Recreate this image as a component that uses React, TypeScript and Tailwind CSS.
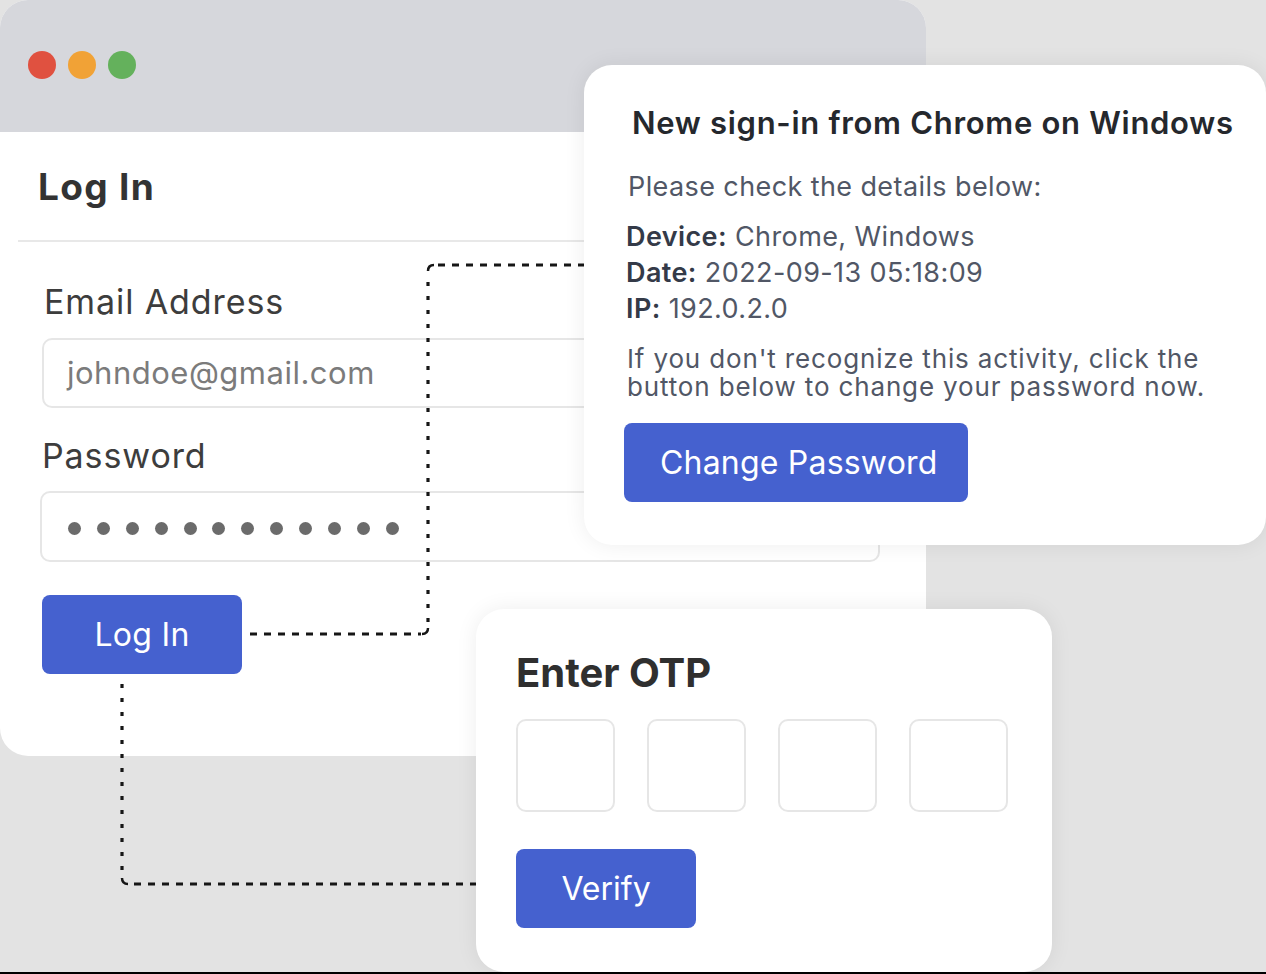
function Connectors() {
  // dotted links from the Log In button to the two follow-up cards
  return (
    <svg
      className="absolute left-0 top-0 pointer-events-none"
      width="1266"
      height="974"
      fill="none"
      stroke="#161616"
      strokeWidth="3.2"
    >
      <path d="M250 634 H421" strokeDasharray="7 7" />
      <path d="M422 634 Q428 634 428 628" strokeWidth="2.5" />
      <path d="M428 622 V273" strokeDasharray="4 10" />
      <path d="M428 271 Q428 265 434 265" strokeWidth="2.5" />
      <path d="M438 265 H600" strokeDasharray="7 7" />
      <path d="M122 684 V876" strokeDasharray="4 10" />
      <path d="M122 878 Q122 884 128 884" strokeWidth="2.5" />
      <path d="M134 884 H490" strokeDasharray="7 7" />
    </svg>
  );
}

function LoginWindow() {
  return (
    <div className="absolute left-0 top-0 w-[926px] h-[756px] rounded-[28px] bg-white overflow-hidden">
      <div className="h-[132px] bg-[#d6d7dc] flex items-center gap-[12px] pl-[28px] pb-[2px]">
        <span className="w-[28px] h-[28px] rounded-full bg-[#e05140]" />
        <span className="w-[28px] h-[28px] rounded-full bg-[#f1a236]" />
        <span className="w-[28px] h-[28px] rounded-full bg-[#64b15c]" />
      </div>
      <div className="px-[18px]">
        <h1 className="pt-[34px] pl-[20px] text-[37px] leading-[42px] font-bold tracking-[1.3px] text-[#333333]">Log In</h1>
        <div className="mt-[32px] h-[2px] bg-[#e8e8e8]" />
        <div className="pl-[24px] pr-[28px]">
          <label className="block mt-[40px] pl-[2px] text-[34px] leading-[40px] tracking-[0.9px] text-[#3d3d3d]">Email Address</label>
          <div className="mt-[16px] h-[70px] rounded-[10px] border-2 border-[#e6e6e6] flex items-center pl-[23px] text-[31px] tracking-[0.5px] text-[#7b7b7b]">
            johndoe@gmail.com
          </div>
          <label className="block mt-[28px] text-[34px] leading-[40px] tracking-[0.9px] text-[#3d3d3d]">Password</label>
          <div className="mt-[15px] -ml-[2px] h-[71px] rounded-[10px] border-2 border-[#e6e6e6] flex items-center gap-[15.9px] pl-[26px] pt-[3px]">
            {Array.from({ length: 12 }).map((_, i) => (
              <span key={i} className="w-[13px] h-[13px] rounded-full bg-[#6b6b6b]" />
            ))}
          </div>
          <button className="mt-[33px] w-[200px] h-[79px] rounded-[8px] bg-[#4561cf] text-white text-[32px] tracking-[0.3px]">Log In</button>
        </div>
      </div>
    </div>
  );
}

function SignInAlert() {
  return (
    <div className="absolute left-[584px] top-[65px] w-[682px] h-[480px] rounded-[28px] bg-white shadow-[0_0_22px_rgba(0,0,0,0.07)] pl-[44px] pt-[40px]">
      <h2 className="pl-[4px] text-[31px] leading-[36px] font-semibold tracking-[0.7px] text-[#25282d] whitespace-nowrap">
        New sign-in from Chrome on Windows
      </h2>
      <p className="mt-[28px] text-[27px] leading-[36px] tracking-[0.4px] text-[#515766]">Please check the details below:</p>
      <div className="mt-[14px] -ml-[2px] text-[27px] leading-[36px] tracking-[0.4px] text-[#515766]">
        <p><span className="font-semibold text-[#343a48]">Device:</span> Chrome, Windows</p>
        <p><span className="font-semibold text-[#343a48]">Date:</span> 2022-09-13 05:18:09</p>
        <p><span className="font-semibold text-[#343a48]">IP:</span> 192.0.2.0</p>
      </div>
      <p className="mt-[18px] -ml-[1px] text-[26px] leading-[28px] tracking-[0.85px] text-[#515766] whitespace-nowrap">
        If you don't recognize this activity, click the
        <br />
        button below to change your password now.
      </p>
      <button className="mt-[22px] -ml-[4px] w-[344px] h-[79px] rounded-[8px] bg-[#4561cf] text-white text-[32px] tracking-[0.2px] text-left pl-[36px]">
        Change Password
      </button>
    </div>
  );
}

function OtpCard() {
  return (
    <div className="absolute left-[476px] top-[609px] w-[576px] h-[363px] rounded-[28px] bg-white shadow-[0_0_22px_rgba(0,0,0,0.07)] pl-[40px] pt-[41px]">
      <h2 className="text-[40px] leading-[46px] font-bold text-[#2f2f2f]">Enter OTP</h2>
      <div className="mt-[23px] flex gap-[32px]">
        {[0, 1, 2, 3].map((i) => (
          <div key={i} className="w-[99px] h-[93px] rounded-[10px] border-2 border-[#e6e6e6]" />
        ))}
      </div>
      <button className="mt-[37px] w-[180px] h-[79px] rounded-[8px] bg-[#4561cf] text-white text-[32px]">Verify</button>
    </div>
  );
}

export default function App() {
  return (
    <div className="relative w-full h-[974px] overflow-hidden bg-[#e3e3e3] border-b-2 border-black font-['Inter',sans-serif]">
      <LoginWindow />
      <Connectors />
      <SignInAlert />
      <OtpCard />
    </div>
  );
}
